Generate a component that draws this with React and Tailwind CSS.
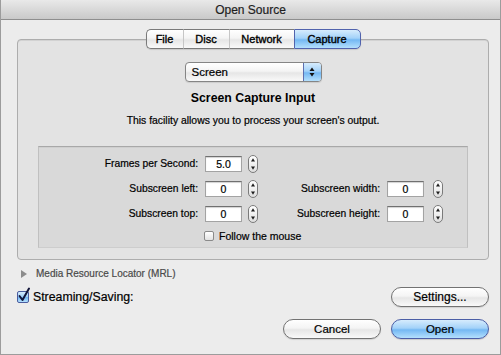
import React from "react";

const Stepper = () => (
  <svg width="10" height="18" viewBox="0 0 10 18" className="block">
    <defs>
      <linearGradient id="stg" x1="0" y1="0" x2="0" y2="1">
        <stop offset="0" stopColor="#ffffff" />
        <stop offset="0.5" stopColor="#f0f0f0" />
        <stop offset="1" stopColor="#dcdcdc" />
      </linearGradient>
    </defs>
    <rect x="0.5" y="0.5" width="9" height="17" rx="4.5" fill="url(#stg)" stroke="#7a7a7a" />
    <path d="M5 3.2 L7 6.4 L3 6.4 Z" fill="#1c1c1c" />
    <path d="M5 14.8 L7 11.6 L3 11.6 Z" fill="#1c1c1c" />
  </svg>
);

const Field = ({ value, className = "" }) => (
  <div
    className={`w-[37px] h-[16px] bg-white border border-[#a3a3a3] border-t-[#707070] shadow-[inset_0_1px_1px_rgba(0,0,0,0.18)] text-center text-[10.5px] leading-[14px] text-black ${className}`}
  >
    {value}
  </div>
);

const Row = ({ l1, v1, l2, v2 }) => (
  <div className="flex items-center h-[18px]">
    <div className="w-[159px] text-right text-[10.3px] leading-[14px]">{l1}</div>
    <Field value={v1} className="ml-[7px]" />
    <div className="ml-[6px]">
      <Stepper />
    </div>
    {l2 && (
      <>
        <div className="w-[122px] text-right text-[10.3px] leading-[14px]">{l2}</div>
        <Field value={v2} className="ml-[7px]" />
        <div className="ml-[9px]">
          <Stepper />
        </div>
      </>
    )}
  </div>
);

const aqua =
  "bg-[linear-gradient(to_bottom,#ffffff_0%,#f4f4f4_45%,#e6e6e6_55%,#f9f9f9_100%)]";
const blue =
  "bg-[linear-gradient(to_bottom,#d6ecfd_0%,#a3d2f9_45%,#74b8f3_55%,#b4e0fd_100%)]";

export default function App() {
  return (
    <div className="w-[501px] h-[355px] bg-[#ececec] border-x border-b border-[#9c9c9c] flex flex-col font-['Liberation_Sans','Arial',sans-serif] text-black overflow-hidden [-webkit-text-stroke:0.2px_currentColor]">
      {/* Title bar */}
      <div className="h-[20px] shrink-0 border-b border-[#8e8e8e] bg-[linear-gradient(to_bottom,#e9e9e9,#c9c9c9)] flex items-center justify-center text-[12px] leading-[14px] text-[#1e1e1e]">
        Open Source
      </div>

      {/* Tab area */}
      <div className="ml-[16px] mr-[11px] mt-[9px] flex flex-col">
        <div className="relative z-10 self-center flex h-[20px] text-[11px] leading-[18px] shadow-[0_1px_1px_rgba(0,0,0,0.12)] rounded-[5px] [-webkit-text-stroke:0.35px_currentColor]">
          <div className={`w-[37px] text-center border border-r-0 border-[#7a7a7a] rounded-l-[5px] ${aqua}`}>File</div>
          <div className={`w-[46px] text-center border border-r-0 border-[#7a7a7a] border-l-[#c6c6c6] ${aqua}`}>Disc</div>
          <div className={`w-[65px] text-center border border-r-0 border-[#7a7a7a] border-l-[#c6c6c6] ${aqua}`}>Network</div>
          <div className={`w-[67px] text-center border border-[#5163ad] rounded-r-[5px] ${blue}`}>Capture</div>
        </div>

        <div className="-mt-[10px] h-[221px] bg-[#e3e3e3] border border-[#adadad] rounded-[4px] shadow-[inset_0_1px_0_#d2d2d2] flex flex-col items-center pt-[22px]">
          {/* Popup */}
          <div className={`w-[137px] h-[20px] flex border border-[#858585] rounded-[4px] overflow-hidden shadow-[0_1px_1px_rgba(0,0,0,0.1)] ${aqua}`}>
            <div className="flex-1 pl-[6px] text-[11.5px] leading-[18px]">Screen</div>
            <div className={`w-[18px] border-l border-[#5c6fb0] flex items-center justify-center ${blue}`}>
              <svg width="6" height="10" viewBox="0 0 6 10">
                <path d="M3 0.5 L5.5 4 L0.5 4 Z" fill="#111" />
                <path d="M3 9.5 L5.5 6 L0.5 6 Z" fill="#111" />
              </svg>
            </div>
          </div>

          <div className="mt-[8px] text-[12.3px] leading-[16px] font-bold [-webkit-text-stroke:0px]">Screen Capture Input</div>
          <div className="mt-[8px] text-[10.4px] leading-[14px]">
            This facility allows you to process your screen's output.
          </div>

          {/* Group box */}
          <div className="mt-[18px] self-stretch mx-[20px] h-[102px] bg-[#d9d9d9] border border-[#c0c0c0] border-t-[#a8a8a8] border-b-[#cdcdcd] shadow-[inset_0_1px_0_#cfcfcf] pt-[8px] flex flex-col gap-[7px]">
            <Row l1="Frames per Second:" v1="5.0" />
            <Row l1="Subscreen left:" v1="0" l2="Subscreen width:" v2="0" />
            <Row l1="Subscreen top:" v1="0" l2="Subscreen height:" v2="0" />
            <div className="flex items-center h-[14px] -mt-[1px] ml-[165px]">
              <div className="w-[10px] h-[10px] rounded-[2px] border border-[#8a8a8a] bg-[linear-gradient(to_bottom,#ffffff,#e2e2e2)]" />
              <div className="ml-[5px] text-[10.5px] leading-[14px]">Follow the mouse</div>
            </div>
          </div>
        </div>
      </div>

      {/* MRL disclosure */}
      <div className="mt-[7px] ml-[20px] flex items-center h-[14px]">
        <svg width="6" height="8" viewBox="0 0 6 8">
          <path d="M0 0 L6 4 L0 8 Z" fill="#8c8c8c" />
        </svg>
        <div className="ml-[9px] text-[10px] leading-[14px] text-[#4a4a4a]">Media Resource Locator (MRL)</div>
      </div>

      {/* Streaming row */}
      <div className="mt-[6px] ml-[16px] mr-[11px] flex items-center justify-between h-[20px]">
        <div className="flex items-center">
          <div className="relative w-[12px] h-[12px]">
            <div className={`w-[12px] h-[12px] rounded-[2px] border border-[#4a5c9e] ${blue}`} />
            <svg width="14" height="16" viewBox="0 0 14 16" className="absolute left-[0px] top-[-4px]">
              <path d="M2.5 9 L5.5 13 L12 1.5" fill="none" stroke="#12153a" strokeWidth="2" strokeLinecap="round" strokeLinejoin="round" />
            </svg>
          </div>
          <div className="ml-[4px] text-[12.3px] leading-[16px]">Streaming/Saving:</div>
        </div>
        <div className={`w-[98px] h-[20px] rounded-full border border-[#727272] text-center text-[12px] leading-[18px] shadow-[0_1px_1px_rgba(0,0,0,0.12)] ${aqua}`}>
          Settings...
        </div>
      </div>

      {/* Buttons */}
      <div className="mt-[12px] mr-[11px] flex justify-end gap-[10px] h-[20px]">
        <div className={`w-[98px] h-[20px] rounded-full border border-[#727272] text-center text-[11.5px] leading-[18px] shadow-[0_1px_1px_rgba(0,0,0,0.12)] ${aqua}`}>
          Cancel
        </div>
        <div className={`w-[98px] h-[20px] rounded-full border border-[#4b5ea6] text-center text-[11.5px] leading-[18px] shadow-[0_1px_1px_rgba(0,0,0,0.15)] ${blue}`}>
          Open
        </div>
      </div>
    </div>
  );
}
